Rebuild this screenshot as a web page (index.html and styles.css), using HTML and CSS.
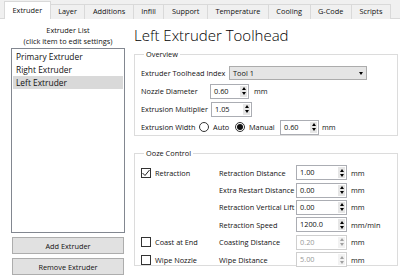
FILE: index.html
```html
<!DOCTYPE html>
<html lang="en">
  <head>
    <meta charset="UTF-8" />
    <title>Extruder Settings</title>
    <link rel="stylesheet" href="styles.css">
  </head>
  <body>
    <div class="window">
      <div class="tabs">
        <div class="tab active">Extruder</div>
        <div class="tab">Layer</div>
        <div class="tab">Additions</div>
        <div class="tab">Infill</div>
        <div class="tab">Support</div>
        <div class="tab">Temperature</div>
        <div class="tab">Cooling</div>
        <div class="tab">G-Code</div>
        <div class="tab">Scripts</div>
      </div>

      <div class="pane">
        <div class="side">
          <div class="side-title">Extruder List<br />(click item to edit settings)</div>
          <div class="list">
            <div class="list-item">Primary Extruder</div>
            <div class="list-item">Right Extruder</div>
            <div class="list-item selected">Left Extruder</div>
          </div>
          <button class="btn">Add Extruder</button>
          <button class="btn">Remove Extruder</button>
        </div>

        <div class="main">
          <h1>Left Extruder Toolhead</h1>

          <fieldset class="group overview">
            <legend>Overview</legend>
            <div class="row">
              <span class="lbl lbl-index">Extruder Toolhead Index</span>
              <div class="combo">
                <span>Tool 1</span>
                <i class="combo-arrow"></i>
              </div>
            </div>
            <div class="row">
              <span class="lbl lbl-nozzle">Nozzle Diameter</span>
              <div class="spin spin-short">
                <span class="spin-val">0.60</span>
                <span class="spin-btns"><i class="up"></i><i class="down"></i></span>
              </div>
              <span class="unit">mm</span>
            </div>
            <div class="row">
              <span class="lbl lbl-mult">Extrusion Multiplier</span>
              <div class="spin spin-mult">
                <span class="spin-val">1.05</span>
                <span class="spin-btns"><i class="up"></i><i class="down"></i></span>
              </div>
            </div>
            <div class="row">
              <span class="lbl lbl-width">Extrusion Width</span>
              <span class="radio"></span>
              <span class="radio-lbl">Auto</span>
              <span class="radio checked"></span>
              <span class="radio-lbl manual">Manual</span>
              <div class="spin spin-short">
                <span class="spin-val">0.60</span>
                <span class="spin-btns"><i class="up"></i><i class="down"></i></span>
              </div>
              <span class="unit unit-tight">mm</span>
            </div>
          </fieldset>

          <fieldset class="group ooze">
            <legend>Ooze Control</legend>
            <div class="ooze-grid">
              <div class="check-cell">
                <span class="check">
                  <svg width="10" height="10" viewBox="0 0 10 10"><polyline points="1.5,5 4,7.5 8.5,2" fill="none" stroke="#222" stroke-width="1" /></svg>
                </span>
                <span>Retraction</span>
              </div>
              <span>Retraction Distance</span>
              <div class="spin">
                <span class="spin-val">1.00</span>
                <span class="spin-btns"><i class="up"></i><i class="down"></i></span>
              </div>
              <span class="unit">mm</span>

              <span></span>
              <span>Extra Restart Distance</span>
              <div class="spin">
                <span class="spin-val">0.00</span>
                <span class="spin-btns"><i class="up"></i><i class="down"></i></span>
              </div>
              <span class="unit">mm</span>

              <span></span>
              <span>Retraction Vertical Lift</span>
              <div class="spin">
                <span class="spin-val">0.00</span>
                <span class="spin-btns"><i class="up"></i><i class="down"></i></span>
              </div>
              <span class="unit">mm</span>

              <span></span>
              <span>Retraction Speed</span>
              <div class="spin">
                <span class="spin-val">1200.0</span>
                <span class="spin-btns"><i class="up"></i><i class="down"></i></span>
              </div>
              <span class="unit">mm/min</span>

              <div class="check-cell">
                <span class="check"></span>
                <span>Coast at End</span>
              </div>
              <span>Coasting Distance</span>
              <div class="spin disabled">
                <span class="spin-val">0.20</span>
                <span class="spin-btns"><i class="up"></i><i class="down"></i></span>
              </div>
              <span class="unit">mm</span>

              <div class="check-cell">
                <span class="check"></span>
                <span>Wipe Nozzle</span>
              </div>
              <span>Wipe Distance</span>
              <div class="spin disabled">
                <span class="spin-val">5.00</span>
                <span class="spin-btns"><i class="up"></i><i class="down"></i></span>
              </div>
              <span class="unit">mm</span>
            </div>
          </fieldset>
        </div>
      </div>
    </div>
  </body>
</html>
```

FILE: styles.css
```css
body {
  margin: 0;
  font-family: "Open Sans", "Noto Sans", sans-serif;
  font-size: 7.35px;
  color: #111;
  background: #fff;
}

.window {
  width: 400px;
  height: 276px;
  overflow: hidden;
  background: #fff;
}

/* tab bar */
.tabs {
  display: flex;
  align-items: flex-end;
  height: 19px;
  padding-left: 4px;
  background: #f0f0f0;
  border-bottom: 1px solid #d9d9d9;
  box-sizing: border-box;
}

.tab {
  height: 14px;
  line-height: 13px;
  padding: 0 7.5px;
  border: 1px solid #d9d9d9;
  border-left: none;
  border-bottom: none;
  background: #f0f0f0;
  margin-bottom: -1px;
  white-space: nowrap;
}

.tab.active {
  height: 17px;
  line-height: 16px;
  background: #fff;
  border-left: 1px solid #d9d9d9;
  position: relative;
}

.pane {
  display: flex;
  height: 257px;
}

/* left list */
.side {
  width: 134px;
  flex: none;
  padding: 6px 0 0 11px;
  box-sizing: border-box;
}

.side-title {
  width: 114px;
  text-align: center;
  line-height: 11px;
}

.list {
  width: 114px;
  height: 185px;
  margin-top: 1px;
  padding: 1px;
  border: 1px solid #828790;
  box-sizing: border-box;
}

.list-item {
  height: 13px;
  line-height: 13px;
  padding-left: 3px;
  font-size: 8.4px;
}

.list-item.selected {
  background: #d9d9d9;
}

.btn {
  display: block;
  width: 112px;
  height: 17px;
  margin: 4px 0 0 1px;
  padding: 0;
  font: inherit;
  color: #111;
  background: #e1e1e1;
  border: 1px solid #adadad;
}

/* right side */
.main {
  flex: 1;
  padding-right: 2px;
}

h1 {
  margin: 5px 0 0 0;
  font-size: 15px;
  font-weight: 300;
  line-height: 22px;
  color: #000;
}

.group {
  margin: 0;
  padding: 0 0 0 6px;
  border: 1px solid #dcdcdc;
}

.group legend {
  margin-left: 3px;
  padding: 0 2px;
  line-height: 10px;
}

.overview {
  height: 87px;
  margin-top: 3px;
  padding-top: 5px;
  box-sizing: border-box;
}

.row {
  display: flex;
  align-items: center;
  height: 18px;
}

.lbl {
  flex: none;
  white-space: nowrap;
}

.lbl-index { width: 88px; }
.lbl-nozzle { width: 69px; }
.lbl-mult { margin-right: 3px; }
.lbl-width { width: 58px; }

.unit {
  margin-left: 5px;
}

.unit-tight {
  margin-left: 3px;
}

.combo {
  display: flex;
  align-items: center;
  justify-content: space-between;
  width: 138px;
  height: 14px;
  padding: 0 3px 0 3px;
  background: #e5e5e5;
  border: 1px solid #acacac;
  box-sizing: border-box;
}

.combo-arrow {
  width: 0;
  height: 0;
  border-left: 2.5px solid transparent;
  border-right: 2.5px solid transparent;
  border-top: 3px solid #000;
}

.radio {
  flex: none;
  width: 10px;
  height: 10px;
  border: 1px solid #333;
  border-radius: 50%;
  box-sizing: border-box;
  display: flex;
  align-items: center;
  justify-content: center;
}

.radio.checked::after {
  content: "";
  width: 6px;
  height: 6px;
  border-radius: 50%;
  background: #111;
}

.radio-lbl {
  margin: 0 4px 0 4px;
  width: 18px;
}

.radio-lbl.manual {
  width: 27px;
}

/* spin boxes */
.spin {
  flex: none;
  display: flex;
  width: 51px;
  height: 15px;
  background: #fff;
  border: 1px solid #abadb3;
  box-sizing: border-box;
}

.spin-short { width: 39px; }
.spin-mult { width: 41px; }

.spin-val {
  flex: 1;
  padding-left: 3px;
  line-height: 13px;
}

.spin-btns {
  width: 7px;
  margin: 1px 1px 1px 0;
  background: #e6e6e6;
  display: flex;
  flex-direction: column;
  align-items: center;
  justify-content: center;
  gap: 2px;
}

.spin-btns i {
  width: 0;
  height: 0;
  border-left: 2.5px solid transparent;
  border-right: 2.5px solid transparent;
}

.spin-btns .up { border-bottom: 3px solid #000; }
.spin-btns .down { border-top: 3px solid #000; }

.spin.disabled {
  border-color: #cfcfcf;
  color: #9a9a9a;
}

.spin.disabled .spin-btns {
  background: #f2f2f2;
}

.spin.disabled .up { border-bottom-color: #a0a0a0; }
.spin.disabled .down { border-top-color: #a0a0a0; }

/* ooze control */
.ooze {
  height: 118px;
  margin-top: 12px;
  padding-top: 6px;
  box-sizing: border-box;
}

.ooze-grid {
  display: grid;
  grid-template-columns: 78px 77px 51px auto;
  grid-auto-rows: 17.4px;
  align-items: center;
}

.ooze-grid .unit {
  margin-left: 4px;
}

.check-cell {
  display: flex;
  align-items: center;
  gap: 4px;
}

.check {
  width: 10px;
  height: 10px;
  border: 1px solid #333;
  box-sizing: border-box;
  display: flex;
  align-items: center;
  justify-content: center;
}

.check svg {
  flex: none;
}
```
